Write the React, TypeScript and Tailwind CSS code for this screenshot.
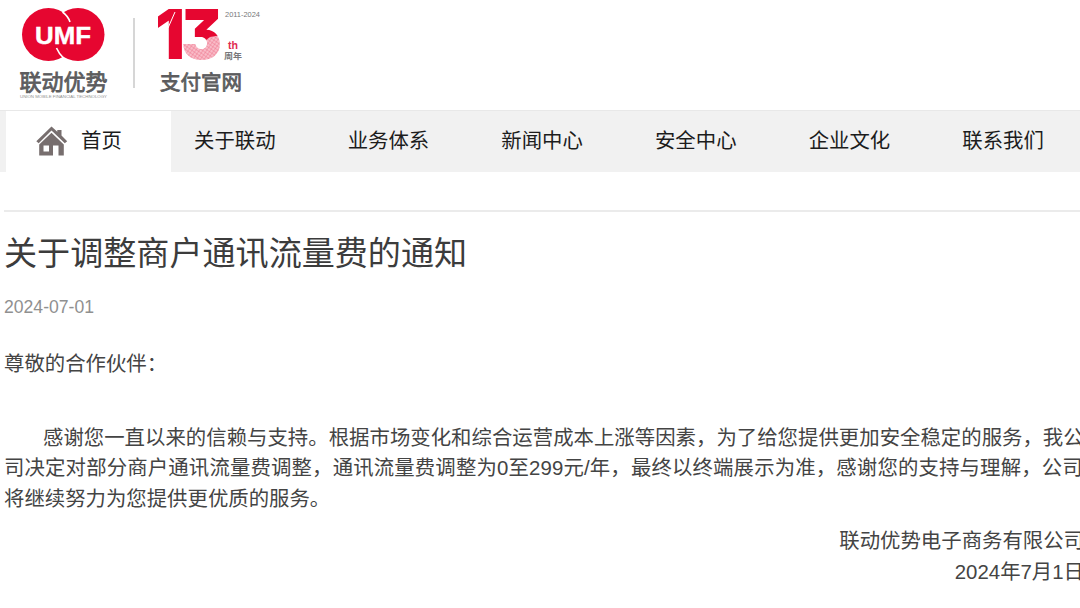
import React from 'react';

const navItems = ['关于联动', '业务体系', '新闻中心', '安全中心', '企业文化', '联系我们'];

const BrandLogo = () => (
    <svg width="90" height="96" viewBox="0 0 90 96" className="shrink-0">
        <circle cx="29.5" cy="30.5" r="26.5" fill="#e60630" />
        <circle cx="59" cy="30.5" r="26.5" fill="#e60630" />
        <path d="M43.5 8 Q49 12 51 18" fill="none" stroke="#fff" strokeWidth="1.6" />
        <path d="M37.5 44 Q40 50 45 54.5" fill="none" stroke="#fff" strokeWidth="1.6" />
        <text x="16" y="39.5" fontSize="24" fontWeight="700" fill="#fff" stroke="#fff" strokeWidth="0.4" textLength="56" lengthAdjust="spacingAndGlyphs">UMF</text>
        <text x="0.5" y="85.5" fontSize="22" fill="#5c5c5e" stroke="#5c5c5e" strokeWidth="0.8" textLength="88" lengthAdjust="spacingAndGlyphs">联动优势</text>
        <text x="1" y="94" fontSize="4" fill="#909090" textLength="87" lengthAdjust="spacingAndGlyphs">UNION MOBILE FINANCIAL TECHNOLOGY</text>
    </svg>
);

const AnniversaryLogo = () => (
    <svg width="108" height="96" viewBox="0 0 108 96" className="shrink-0">
        <defs>
            <pattern id="mesh" width="3" height="3" patternUnits="userSpaceOnUse" patternTransform="rotate(35)">
                <rect width="3" height="3" fill="#f9bcc8" />
                <path d="M0 0H3M0 0V3" stroke="#ee6d87" strokeWidth="0.8" />
            </pattern>
            {/* solid red on top, mesh on the lower bowl */}
            <pattern id="ribbon" width="108" height="96" patternUnits="userSpaceOnUse">
                <rect width="108" height="96" fill="url(#mesh)" />
                <path d="M0 0H108V30L64 31L52 33L44 39L32 33L0 33Z" fill="#e60630" />
            </pattern>
        </defs>
        <text x="-3" y="55" fontSize="69" fontWeight="900" fill="#e60630" className="font-[Inter]" textLength="30" lengthAdjust="spacingAndGlyphs">1</text>
        <text x="23" y="55" fontSize="69" fontWeight="900" fill="url(#ribbon)" className="font-[Inter] [font-feature-settings:'cv09']" textLength="41" lengthAdjust="spacingAndGlyphs">3</text>
        <path d="M17 8L10 24" stroke="#fff" strokeWidth="1" />
        <text x="67" y="12.5" fontSize="7.5" fill="#77777a" textLength="35" lengthAdjust="spacingAndGlyphs">2011-2024</text>
        <text x="70" y="45" fontSize="11.5" fontWeight="700" fill="#df2c50" textLength="10" lengthAdjust="spacingAndGlyphs">th</text>
        <text x="66" y="54.5" fontSize="8.5" fontWeight="700" fill="#77777a" textLength="18" lengthAdjust="spacingAndGlyphs">周年</text>
        <text x="2" y="85.5" fontSize="20.5" fill="#5c5c5e" stroke="#5c5c5e" strokeWidth="0.8" textLength="82" lengthAdjust="spacingAndGlyphs">支付官网</text>
    </svg>
);

const HomeIcon = () => (
    <svg width="32" height="30" viewBox="0 0 32 30" fill="#776e6e" className="-mt-0.5 shrink-0">
        <path d="M0.3 15.3L15.5 0.5L21.3 5.7V4H25.5V9.5L31.2 15.3L28.8 17.3L15.5 4.5L2.7 17.3Z" />
        <path d="M15.5 6.7L27.8 18.5V29.5H22.5V19.5H17V29.5H3.2V18.5ZM7.5 19.5V25.5H13V19.5Z" fillRule="evenodd" />
    </svg>
);

const App = () => {
    return (
        <div lang="zh-CN" className="h-[608px] w-[1080px] overflow-hidden bg-white font-['Liberation_Sans','Noto_Sans_CJK_SC',sans-serif] text-[20.4px] text-[#444]">
            <header className="flex h-[110px] items-start pt-1 pl-[19px]">
                <BrandLogo />
                <div className="mt-3.5 ml-[24px] h-[70px] w-[2px] bg-[#d6d6d6]" />
                <div className="ml-[23px]">
                    <AnniversaryLogo />
                </div>
            </header>

            <nav className="flex h-[62px] border-t border-[#e8e8e8] bg-[#f1f1f1] pl-1.5 leading-[60px] text-[#1c1c1c]">
                <a className="flex w-[165px] shrink-0 items-center gap-[13px] bg-white pl-[30px]">
                    <HomeIcon />
                    <span className="-mt-px">首页</span>
                </a>
                <div className="flex shrink-0 gap-[72.1px] pl-[23px]">
                    {navItems.map((item) => (
                        <a key={item} className="whitespace-nowrap">{item}</a>
                    ))}
                </div>
            </nav>

            <main className="mt-[38px] ml-1 border-t-2 border-[#ebebeb]">
                <h1 className="mt-5 text-[33.1px] leading-[44px] whitespace-nowrap text-[#3c3c3c]">关于调整商户通讯流量费的通知</h1>
                <p className="mt-[19px] text-[17.6px] leading-6 text-[#909090]">2024-07-01</p>

                {/* Notice body */}
                <div className="mt-[30px] leading-[30.6px] whitespace-nowrap">
                    <p>尊敬的合作伙伴：</p>
                    <div className="mt-[43px]">
                        <p className="pl-[39px] tracking-[0.015px]">感谢您一直以来的信赖与支持。根据市场变化和综合运营成本上涨等因素，为了给您提供更加安全稳定的服务，我公</p>
                        <p className="tracking-[0.15px]">司决定对部分商户通讯流量费调整，通讯流量费调整为0至299元/年，最终以终端展示为准，感谢您的支持与理解，公司</p>
                        <p>将继续努力为您提供更优质的服务。</p>
                    </div>
                    <div className="mt-3 -mr-1 text-right">
                        <p>联动优势电子商务有限公司</p>
                        <p>2024年7月1日</p>
                    </div>
                </div>
            </main>
        </div>
    );
};

export default App;
